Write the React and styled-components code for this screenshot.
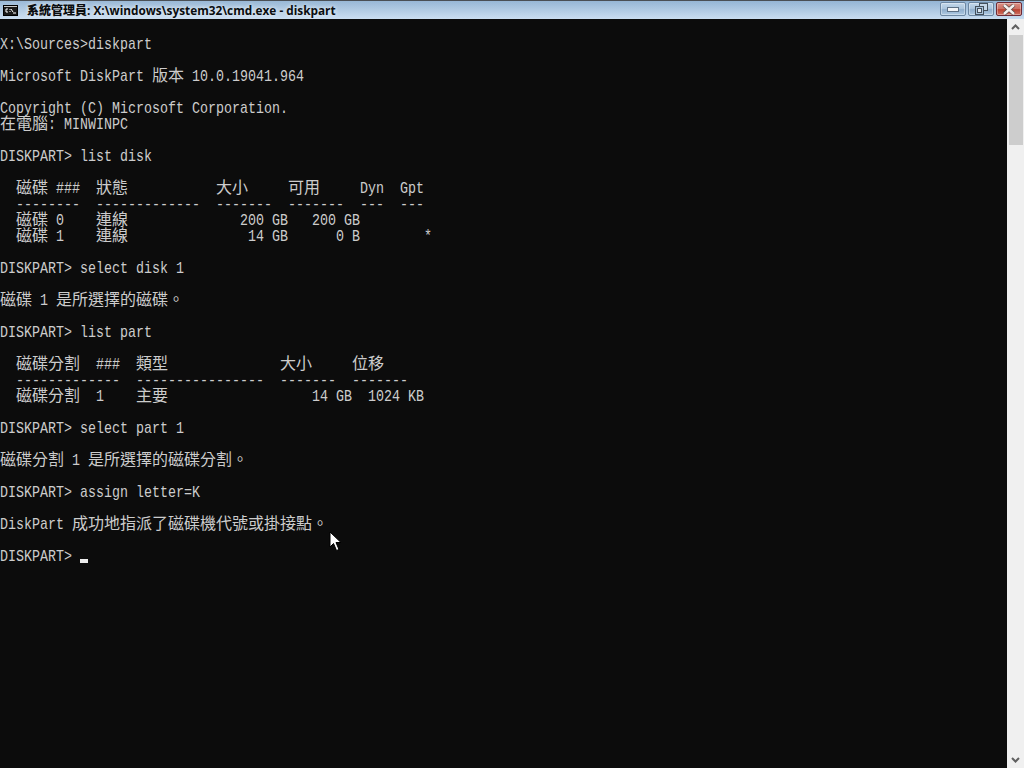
import React from "react";
import styled, { createGlobalStyle } from "styled-components";

const GlobalStyle = createGlobalStyle`
  html, body {
    margin: 0;
    padding: 0;
    background: #0c0c0c;
    overflow: hidden;
  }
`;

const Window = styled.div`
  position: relative;
  display: flex;
  flex-direction: column;
  width: 1024px;
  height: 768px;
  overflow: hidden;
`;

const TitleBar = styled.div`
  display: flex;
  align-items: center;
  height: 19px;
  flex: none;
  padding: 0 2px 0 3px;
  box-sizing: border-box;
  border-top: 1px solid #4a4f55;
  background: linear-gradient(90deg, rgba(255, 255, 255, 0.08), rgba(255, 255, 255, 0)),
    linear-gradient(#93b4d4, #c8dcf0);
`;

const TitleIcon = styled.svg`
  width: 15px;
  height: 11px;
  flex: none;
  margin-right: 9px;
`;

const TitleText = styled.div`
  flex: 1;
  font-family: "Open Sans", "Noto Sans CJK TC", sans-serif;
  font-size: 11.8px;
  font-weight: 700;
  line-height: 18px;
  color: #0a0d10;
  white-space: pre;
  text-shadow: 0 0 4px rgba(255, 255, 255, 0.9);
`;

const TitleCjk = styled.span`
  font-family: "Noto Sans CJK TC", sans-serif;
  font-size: 12px;
  font-weight: 900;
`;

const ButtonGroup = styled.div`
  display: flex;
  gap: 2px;
  margin-top: -2px;
`;

const WinButton = styled.div`
  display: flex;
  align-items: center;
  justify-content: center;
  width: 26px;
  height: 14px;
  box-sizing: border-box;
  border: 1px solid ${(p) => (p.$close ? "#6e2a35" : "#6c87a3")};
  border-radius: 2px;
  box-shadow: inset 0 0 0 1px rgba(255, 255, 255, 0.35);
  background: ${(p) =>
    p.$close
      ? "linear-gradient(#d98f84 0%, #cc6f63 50%, #b9402f 55%, #cf7264 100%)"
      : "linear-gradient(#c3d7ea 0%, #a9c3dc 50%, #8fadcb 55%, #afcae3 100%)"};
`;

const Body = styled.div`
  display: flex;
  flex: 1;
  min-height: 0;
`;

const Console = styled.div`
  flex: 1;
  background: #0c0c0c;
  color: #cccccc;
`;

const Line = styled.div`
  display: flex;
  height: 16px;
  white-space: pre;
`;

// the console font is narrower and taller than Liberation Mono, so stretch it
const Latin = styled.span`
  display: block;
  height: 16px;
  font-family: "Liberation Mono", monospace;
  font-size: 13.333px;
  line-height: 16px;
  transform: translateY(2px) scaleY(1.2);
`;

const Cjk = styled.span`
  display: block;
  height: 16px;
  font-family: "Noto Sans CJK TC", sans-serif;
  font-size: 16px;
  font-weight: 400;
  line-height: 14px;
`;

const Caret = styled.span`
  display: block;
  align-self: flex-end;
  width: 8px;
  height: 4px;
  background: #ededed;
`;

const Scrollbar = styled.div`
  display: flex;
  flex-direction: column;
  align-items: center;
  width: 17px;
  flex: none;
  background: #f0f0f0;
`;

const ScrollArrow = styled.div`
  display: flex;
  align-items: center;
  justify-content: center;
  width: 17px;
  height: 16px;
  flex: none;
`;

const ScrollThumb = styled.div`
  width: 14px;
  height: 110px;
  margin-left: 1px;
  background: #cdcdcd;
`;

const ScrollTrack = styled.div`
  flex: 1;
`;

const Pointer = styled.svg`
  position: absolute;
  left: 329px;
  top: 531px;
  width: 14px;
  height: 22px;
`;

const lines = [
  "",
  "X:\\Sources>diskpart",
  "",
  "Microsoft DiskPart 版本 10.0.19041.964",
  "",
  "Copyright (C) Microsoft Corporation.",
  "在電腦: MINWINPC",
  "",
  "DISKPART> list disk",
  "",
  "  磁碟 ###  狀態           大小     可用     Dyn  Gpt",
  "  --------  -------------  -------  -------  ---  ---",
  "  磁碟 0    連線              200 GB   200 GB",
  "  磁碟 1    連線               14 GB      0 B        *",
  "",
  "DISKPART> select disk 1",
  "",
  "磁碟 1 是所選擇的磁碟。",
  "",
  "DISKPART> list part",
  "",
  "  磁碟分割  ###  類型              大小     位移",
  "  -------------  ----------------  -------  -------",
  "  磁碟分割  1    主要                  14 GB  1024 KB",
  "",
  "DISKPART> select part 1",
  "",
  "磁碟分割 1 是所選擇的磁碟分割。",
  "",
  "DISKPART> assign letter=K",
  "",
  "DiskPart 成功地指派了磁碟機代號或掛接點。",
  "",
];

// CJK glyphs take two console cells, so they get their own size
const splitCjk = (text) =>
  text.split(/([\u2E80-\uFFFF]+)/).map((part, i) => {
    if (!part) return null;
    return i % 2 === 1 ? <Cjk key={i}>{part}</Cjk> : <Latin key={i}>{part}</Latin>;
  });

const CmdIcon = () => (
  <TitleIcon viewBox="0 0 15 11">
    <rect width="15" height="11" fill="#000" />
    <rect x="1" y="1" width="13" height="1" fill="#c8c8c8" />
    <rect x="1" y="2" width="13" height="8" fill="#1a1a1a" />
    <path d="M5 4H3v3h2M7 4v1M7 6v1M8 4l2 3M10 8h3" stroke="#fff" fill="none" strokeWidth="1" />
  </TitleIcon>
);

const App = () => {
  return (
    <Window lang="zh-TW">
      <GlobalStyle />
      <TitleBar>
        <CmdIcon />
        <TitleText>
          <TitleCjk>系統管理員</TitleCjk>: X:\windows\system32\cmd.exe - diskpart
        </TitleText>
        <ButtonGroup>
          <WinButton>
            <svg width="12" height="5" viewBox="0 0 12 5">
              <rect x="0.5" y="0.5" width="11" height="4" fill="#f2f4f7" stroke="#5d7085" />
            </svg>
          </WinButton>
          <WinButton>
            <svg width="14" height="12" viewBox="0 0 14 12">
              <rect x="5.5" y="0.5" width="8" height="7" fill="#c4d6e8" stroke="#44505c" />
              <rect x="1.5" y="3.5" width="8" height="8" fill="#a9c3dc" stroke="#44505c" />
              <rect x="3.5" y="5.5" width="4" height="4" fill="#dbe6f1" stroke="#44505c" />
            </svg>
          </WinButton>
          <WinButton $close>
            <svg width="14" height="11" viewBox="0 0 14 11">
              <path d="M2 1l10 9M12 1L2 10" stroke="#5c4a48" strokeWidth="4" />
              <path d="M2 1l10 9M12 1L2 10" stroke="#f4f0ee" strokeWidth="2.4" />
            </svg>
          </WinButton>
        </ButtonGroup>
      </TitleBar>
      <Body>
        <Console>
          {lines.map((text, i) => (
            <Line key={i}>{splitCjk(text)}</Line>
          ))}
          <Line>
            <Latin>{"DISKPART> "}</Latin>
            <Caret />
          </Line>
        </Console>
        <Scrollbar>
          <ScrollArrow>
            <svg width="9" height="6" viewBox="0 0 9 6">
              <path d="M1 5l3.5-3.5L8 5" stroke="#606060" strokeWidth="2" fill="none" />
            </svg>
          </ScrollArrow>
          <ScrollThumb />
          <ScrollTrack />
          <ScrollArrow>
            <svg width="9" height="6" viewBox="0 0 9 6">
              <path d="M1 1l3.5 3.5L8 1" stroke="#606060" strokeWidth="2" fill="none" />
            </svg>
          </ScrollArrow>
        </Scrollbar>
      </Body>
      <Pointer viewBox="0 0 14 22">
        <path
          d="M1 1v15l3.5-3.5 3 7 2.5-1-3-7h5z"
          fill="#fff"
          stroke="#000"
          strokeWidth="1"
        />
      </Pointer>
    </Window>
  );
};

export default App;
